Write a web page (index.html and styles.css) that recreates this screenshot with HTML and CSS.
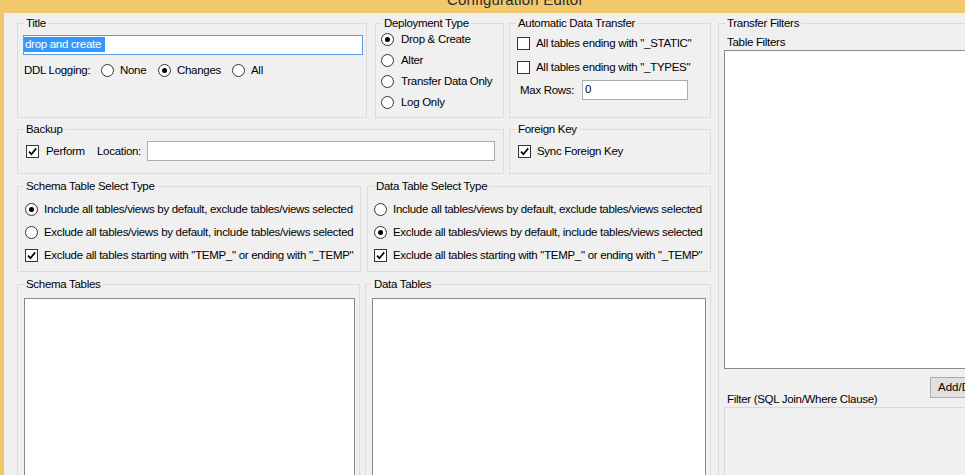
FILE: index.html
```html
<!DOCTYPE html>
<html>
<head>
<meta charset="utf-8">
<title>Configuration Editor</title>
<link rel="stylesheet" href="styles.css">
</head>
<body>
<div class="titlebar"><span>Configuration Editor</span></div>
<div class="frame">
  <div class="edge"></div>
  <div class="client">
    <div class="left">
      <div class="row row1">
        <div class="grp g-title">
          <span class="cap">Title</span>
          <div class="tb focus"><span class="sel">drop and create</span></div>
          <div class="ddl">
            <span class="ddl-lbl">DDL Logging:</span>
            <label class="opt w-none"><span class="rb"></span>None</label>
            <label class="opt w-changes"><span class="rb on"></span>Changes</label>
            <label class="opt"><span class="rb"></span>All</label>
          </div>
        </div>
        <div class="grp g-deploy">
          <span class="cap">Deployment Type</span>
          <label class="opt r21"><span class="rb on"></span>Drop &amp; Create</label>
          <label class="opt r21"><span class="rb"></span>Alter</label>
          <label class="opt r21"><span class="rb"></span>Transfer Data Only</label>
          <label class="opt r21"><span class="rb"></span>Log Only</label>
        </div>
        <div class="grp g-auto">
          <span class="cap">Automatic Data Transfer</span>
          <label class="opt r24"><span class="cb"></span>All tables ending with "_STATIC"</label>
          <label class="opt r24"><span class="cb"></span>All tables ending with "_TYPES"</label>
          <div class="maxrows">
            <span class="mr-lbl">Max Rows:</span>
            <div class="tb mr-tb">0</div>
          </div>
        </div>
      </div>
      <div class="row row2">
        <div class="grp g-backup">
          <span class="cap">Backup</span>
          <div class="brow">
            <label class="opt w-perform"><span class="cb"><svg viewBox="0 0 11 11" width="11" height="11"><path d="M2 5.6 L4.4 8.2 L9.2 2.4" fill="none" stroke="#000" stroke-width="1.7"/></svg></span>Perform</label>
            <span class="loc-lbl">Location:</span>
            <div class="tb loc-tb"></div>
          </div>
        </div>
        <div class="grp g-fk">
          <span class="cap">Foreign Key</span>
          <div class="brow">
            <label class="opt"><span class="cb"><svg viewBox="0 0 11 11" width="11" height="11"><path d="M2 5.6 L4.4 8.2 L9.2 2.4" fill="none" stroke="#000" stroke-width="1.7"/></svg></span>Sync Foreign Key</label>
          </div>
        </div>
      </div>
      <div class="row row3">
        <div class="grp g-sel g-ssel">
          <span class="cap">Schema Table Select Type</span>
          <label class="opt r23"><span class="rb on"></span>Include all tables/views by default, exclude tables/views selected</label>
          <label class="opt r23"><span class="rb"></span>Exclude all tables/views by default, include tables/views selected</label>
          <label class="opt r22"><span class="cb"><svg viewBox="0 0 11 11" width="11" height="11"><path d="M2 5.6 L4.4 8.2 L9.2 2.4" fill="none" stroke="#000" stroke-width="1.7"/></svg></span>Exclude all tables starting with "TEMP_" or ending with "_TEMP"</label>
        </div>
        <div class="grp g-sel g-dsel">
          <span class="cap">Data Table Select Type</span>
          <label class="opt r23"><span class="rb"></span>Include all tables/views by default, exclude tables/views selected</label>
          <label class="opt r23"><span class="rb on"></span>Exclude all tables/views by default, include tables/views selected</label>
          <label class="opt r22"><span class="cb"><svg viewBox="0 0 11 11" width="11" height="11"><path d="M2 5.6 L4.4 8.2 L9.2 2.4" fill="none" stroke="#000" stroke-width="1.7"/></svg></span>Exclude all tables starting with "TEMP_" or ending with "_TEMP"</label>
        </div>
      </div>
      <div class="row row4">
        <div class="grp g-stables">
          <span class="cap">Schema Tables</span>
          <div class="listbox lb-schema"></div>
        </div>
        <div class="grp g-dtables">
          <span class="cap">Data Tables</span>
          <div class="listbox lb-data"></div>
        </div>
      </div>
    </div>
    <div class="right">
      <div class="grp g-filters">
        <span class="cap">Transfer Filters</span>
        <div class="sub-lbl tf-lbl">Table Filters</div>
        <div class="listbox lb-filters"></div>
        <div class="btnrow"><button class="btn">Add/Delete</button></div>
        <div class="sub-lbl fl-lbl">Filter (SQL Join/Where Clause)</div>
        <div class="filterbox"></div>
      </div>
    </div>
  </div>
</div>
</body>
</html>
```

FILE: styles.css
```css
* { box-sizing: border-box; }
html, body { margin: 0; padding: 0; }
body {
  width: 965px;
  height: 475px;
  overflow: hidden;
  background: #f0f0f0;
  font-family: "Liberation Sans", Arial, sans-serif;
  font-size: 11.5px;
  letter-spacing: -0.3px;
  line-height: 15px;
  color: #000;
}

.titlebar {
  height: 13px;
  background: #f1c86c;
  overflow: hidden;
}
.titlebar span {
  display: block;
  padding-left: 447px;
  font-size: 15px;
  letter-spacing: 0.2px;
  line-height: 18px;
  margin-top: -9px;
  color: #2a2a2a;
  white-space: nowrap;
}

.frame { display: flex; height: 462px; overflow: hidden; }
.edge { width: 4px; flex: none; background: #f1c86c; }
.client { display: flex; gap: 7px; padding: 10px 0 0 13px; }

.left { display: flex; flex-direction: column; width: 694px; flex: none; }
.row { display: flex; flex: none; }
.row1 { height: 95px; }
.row2 { height: 45px; margin-top: 11px; }
.row3 { height: 86px; margin-top: 12px; }
.row4 { height: 200px; margin-top: 12px; }

.grp {
  position: relative;
  border: 1px solid #dcdcdc;
  flex: none;
  display: flex;
  flex-direction: column;
}
.cap {
  position: absolute;
  top: -8px;
  left: 6px;
  padding: 0 2px;
  background: #f0f0f0;
  line-height: 15px;
  white-space: nowrap;
}

/* row 1 */
.g-title { width: 350px; padding: 11px 0 0 5px; }
.g-deploy { width: 129px; margin-left: 8px; padding: 5px 0 0 5px; }
.g-auto { width: 202px; margin-left: 5px; padding: 7px 0 0 7px; }

.tb {
  height: 20px;
  border: 1px solid #abadb3;
  background: #fff;
  padding: 1px 0 0 2px;
  white-space: nowrap;
}
.tb.focus { width: 340px; border-color: #569de5; padding-left: 0; }
.sel { display: inline-block; background: #3399ff; color: #fff; padding: 0 4px 0 1px; line-height: 15px; }

.ddl { display: flex; align-items: center; height: 16px; margin-top: 7px; }
.ddl-lbl { width: 78px; padding-left: 1px; }
.w-none { width: 57px; }
.w-changes { width: 74px; }

.opt { display: flex; align-items: center; gap: 6px; white-space: nowrap; }
.r21 { height: 21px; gap: 7px; }
.r22 { height: 22px; }
.r23 { height: 23px; }
.r24 { height: 24px; }

.rb {
  width: 13px; height: 13px;
  border: 1px solid #333;
  border-radius: 50%;
  background: #fff;
  flex: none;
  display: inline-flex;
  align-items: center;
  justify-content: center;
}
.rb.on::after {
  content: "";
  width: 5px; height: 5px;
  border-radius: 50%;
  background: #000;
}
.cb {
  width: 13px; height: 13px;
  border: 1px solid #333;
  background: #fff;
  flex: none;
  display: inline-flex;
}
.cb svg { display: block; }

.maxrows { display: flex; align-items: center; margin: 1px 0 0 3px; }
.mr-lbl { width: 62px; }
.mr-tb { width: 106px; }

/* row 2 */
.g-backup { width: 487px; padding: 11px 0 0 8px; }
.g-fk { width: 202px; margin-left: 5px; padding: 11px 0 0 8px; }
.brow { display: flex; align-items: center; height: 20px; }
.w-perform { width: 71px; gap: 7px; }
.loc-lbl { width: 50px; }
.loc-tb { width: 348px; }

/* row 3 */
.g-sel { width: 344px; padding-top: 11px; }
.g-ssel { padding-left: 7px; }
.g-dsel { margin-left: 6px; padding-left: 6px; }

/* row 4 */
.g-stables { width: 343px; padding: 13px 0 0 6px; }
.g-dtables { width: 346px; margin-left: 5px; padding: 13px 0 0 6px; }
.listbox { background: #fff; border: 1px solid #8a8a8a; flex: none; }
.lb-schema { width: 331px; height: 186px; }
.lb-data { width: 334px; height: 186px; }

/* right panel */
.right { flex: none; }
.g-filters { width: 270px; height: 460px; padding: 0 0 0 5px; }
.sub-lbl { line-height: 15px; padding-left: 3px; white-space: nowrap; }
.tf-lbl { margin-top: 11px; }
.lb-filters { width: 260px; height: 319px; }
.btnrow { display: flex; margin-top: 8px; padding-left: 206px; }
.btn {
  font: inherit;
  height: 21px;
  width: 76px;
  margin: 0;
  padding: 0 0 0 7px;
  text-align: left;
  background: #e1e1e1;
  border: 1px solid #adadad;
  color: #000;
  white-space: nowrap;
}
.fl-lbl { margin-top: -6px; }
.filterbox { width: 260px; height: 80px; border: 1px solid #d9d9d9; background: #f0f0f0; }
```
